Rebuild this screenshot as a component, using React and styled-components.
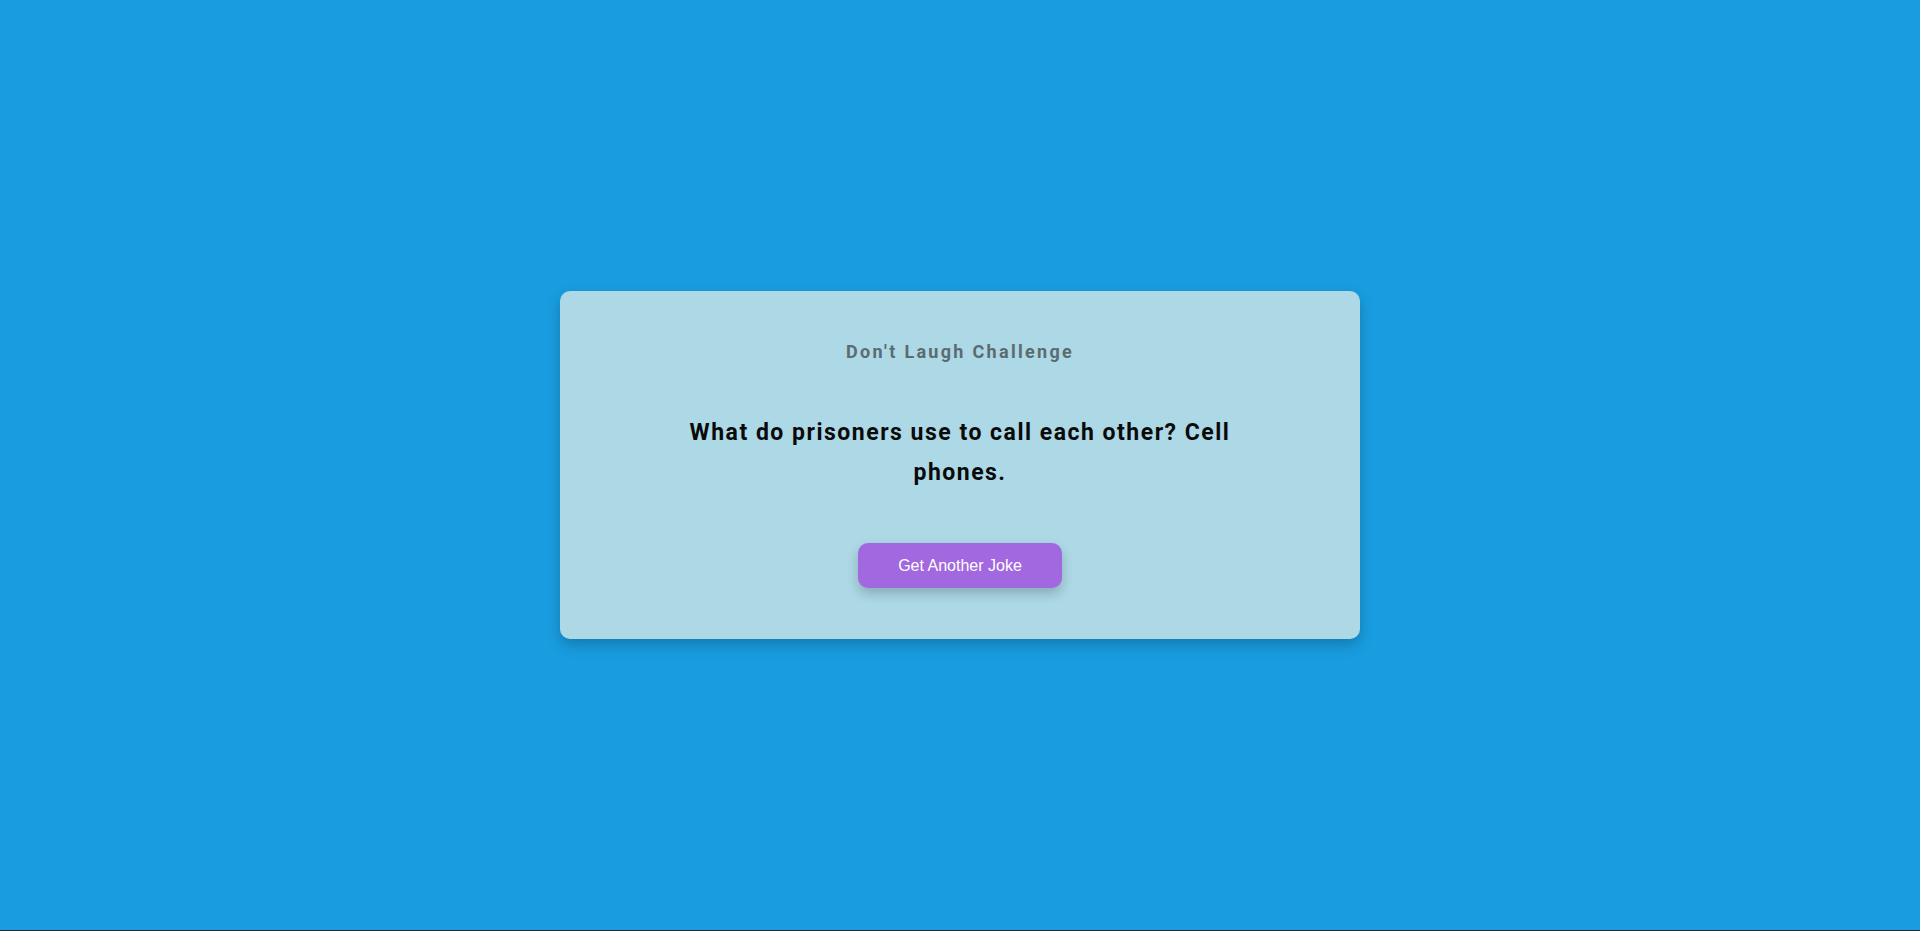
import React, { useState } from 'react';
import styled, { createGlobalStyle } from 'styled-components';

const GlobalStyle = createGlobalStyle`
  html, body {
    margin: 0;
    padding: 0;
    background: #202a30;
  }
  * {
    box-sizing: border-box;
  }
`;

const Page = styled.main`
  height: 930px;
  background: #199de0;
  display: flex;
  align-items: center;
  justify-content: center;
  font-family: Roboto, 'Noto Sans', sans-serif;
`;

const Card = styled.section`
  width: 800px;
  background: #add8e6;
  border-radius: 10px;
  box-shadow: 0 6px 14px rgba(0, 0, 0, 0.22);
  padding: 50px 40px 51px;
  display: flex;
  flex-direction: column;
  align-items: center;
  gap: 50px;
  text-align: center;
`;

const Title = styled.h3`
  margin: 0;
  font-size: 18px;
  line-height: 22px;
  font-weight: 700;
  letter-spacing: 2.3px;
  color: #5b6b70;
`;

const Joke = styled.p`
  margin: 0;
  max-width: 580px;
  font-size: 23px;
  line-height: 40px;
  font-weight: 700;
  letter-spacing: 1.5px;
  color: #0a0a0a;
`;

const Button = styled.button`
  height: 45px;
  padding: 0 40px;
  border: none;
  border-radius: 10px;
  background: #a168e0;
  color: #ffffff;
  font-family: 'Liberation Sans', Arial, sans-serif;
  font-size: 16px;
  cursor: pointer;
  box-shadow: 0 6px 12px rgba(0, 0, 0, 0.2);
`;

const App = () => {
  const [joke] = useState('What do prisoners use to call each other? Cell phones.');

  return (
    <>
      <GlobalStyle />
      <Page>
        <Card>
          <Title>Don't Laugh Challenge</Title>
          <Joke>{joke}</Joke>
          <Button>Get Another Joke</Button>
        </Card>
      </Page>
    </>
  );
};

export default App;
